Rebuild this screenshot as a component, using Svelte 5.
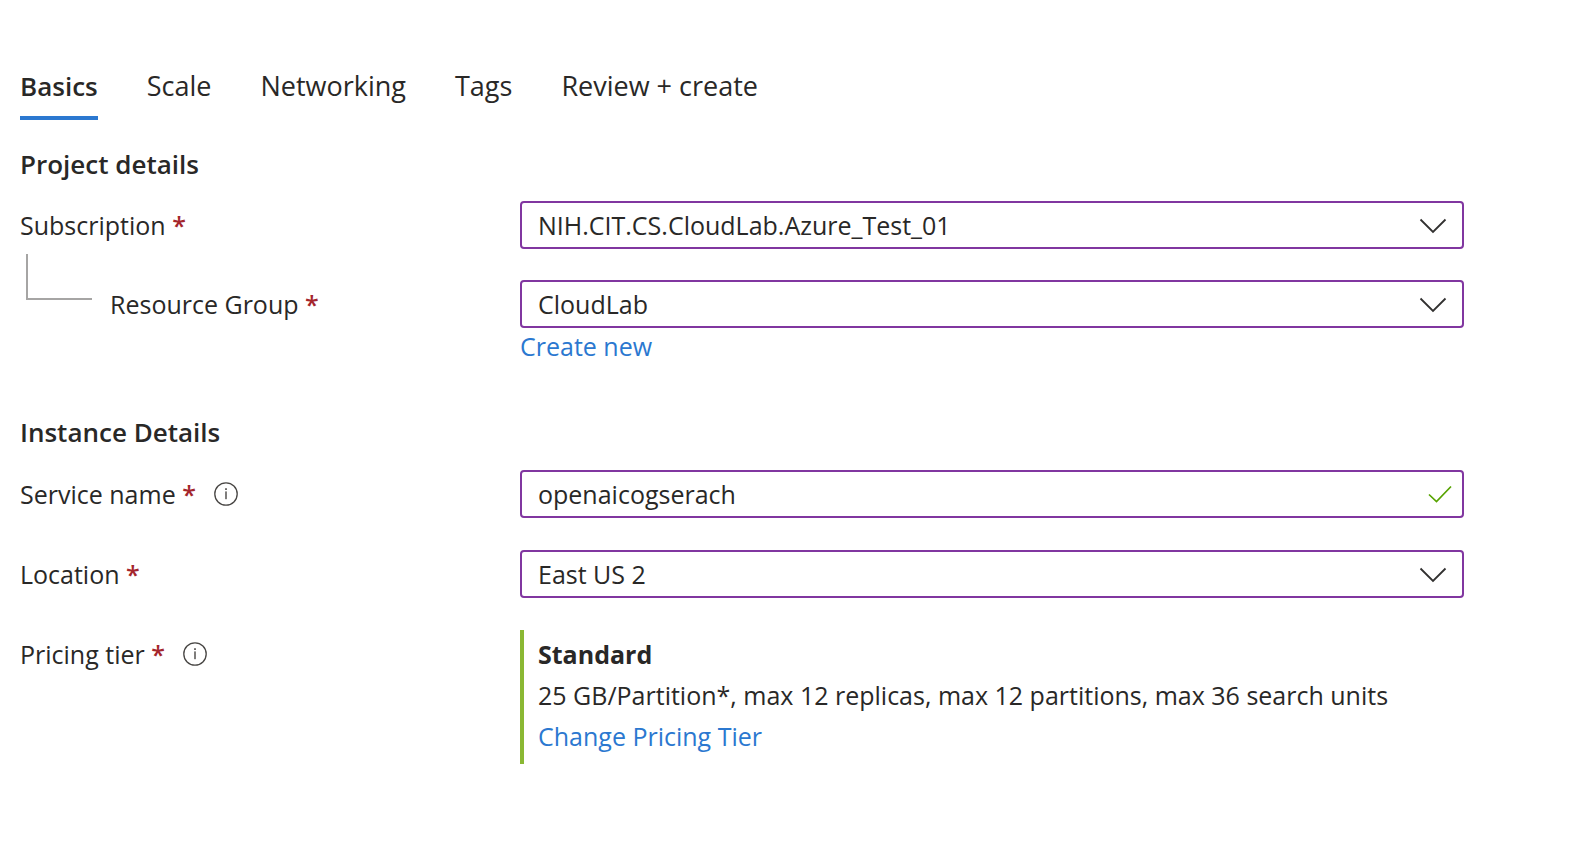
<script>
  const tabs = ['Basics', 'Scale', 'Networking', 'Tags', 'Review + create'];
  let active = $state('Basics');
  let serviceName = $state('openaicogserach');
</script>

{#snippet chevron()}
  <svg class="chevron" viewBox="0 0 28 16" aria-hidden="true">
    <path d="M1.5 1.5 L14 14 L26.5 1.5" fill="none" stroke="#323130" stroke-width="1.8" />
  </svg>
{/snippet}

{#snippet info(label)}
  <button class="info" type="button" aria-label={label}>
    <svg viewBox="0 0 24 24" aria-hidden="true">
      <circle cx="12" cy="12" r="11.2" fill="none" stroke="#484644" stroke-width="1.3" />
      <rect x="11.2" y="9.4" width="1.6" height="7.8" fill="#605e5c" />
      <rect x="11.1" y="6.2" width="1.8" height="1.8" fill="#605e5c" />
    </svg>
  </button>
{/snippet}

<main>
  <div class="tabs" role="tablist">
    {#each tabs as tab}
      <button
        type="button"
        role="tab"
        class:active={tab === active}
        aria-selected={tab === active}
        onclick={() => (active = tab)}>{tab}</button>
    {/each}
  </div>

  <form>
    <section>
      <h2>Project details</h2>
      <div class="rows">
        <div class="row">
          <div class="label">
            <label for="subscription">Subscription <span class="req">*</span></label>
          </div>
          <div class="control">
            <select id="subscription"><option>NIH.CIT.CS.CloudLab.Azure_Test_01</option></select>
            {@render chevron()}
          </div>
        </div>
        <div class="row">
          <div class="label child">
            <span class="branch"></span>
            <label for="group">Resource Group <span class="req">*</span></label>
          </div>
          <div>
            <div class="control">
              <select id="group"><option>CloudLab</option></select>
              {@render chevron()}
            </div>
            <a class="below" href="#create">Create new</a>
          </div>
        </div>
      </div>
    </section>

    <section>
      <h2>Instance Details</h2>
      <div class="rows">
        <div class="row">
          <div class="label">
            <label for="service">Service name <span class="req">*</span></label>
            {@render info('About service name')}
          </div>
          <div class="control">
            <input id="service" type="text" bind:value={serviceName} />
            <svg class="check" viewBox="0 0 24 18" aria-hidden="true">
              <path d="M1 9.5 L8.5 16.5 L23 1.5" fill="none" stroke="#57a300" stroke-width="1.7" />
            </svg>
          </div>
        </div>
        <div class="row">
          <div class="label">
            <label for="location">Location <span class="req">*</span></label>
          </div>
          <div class="control">
            <select id="location"><option>East US 2</option></select>
            {@render chevron()}
          </div>
        </div>
        <div class="row">
          <div class="label">
            <span>Pricing tier <span class="req">*</span></span>
            {@render info('About pricing tier')}
          </div>
          <div class="tier">
            <strong>Standard</strong>
            <span>25 GB/Partition*, max 12 replicas, max 12 partitions, max 36 search units</span>
            <a href="#tier">Change Pricing Tier</a>
          </div>
        </div>
      </div>
    </section>
  </form>
</main>

<style>
  :global(body) {
    margin: 0;
    background: #fff;
  }
  main {
    box-sizing: border-box;
    padding: 68px 112px 68px 20px;
    font-family: 'Segoe UI', 'Open Sans', 'Noto Sans', sans-serif;
    font-size: 25px;
    line-height: 36px;
    color: #292827;
  }
  button,
  select,
  input {
    font: inherit;
    color: inherit;
  }
  .tabs {
    display: flex;
    flex-wrap: wrap;
    gap: 49px;
  }
  .tabs button {
    padding: 0 0 12px;
    border: 0;
    border-bottom: 4px solid transparent;
    background: none;
    font-size: 27px;
    cursor: pointer;
  }
  .tabs button.active {
    font-size: 26px;
    font-weight: 600;
    border-bottom-color: #2b78d0;
  }
  h2 {
    margin: 26px 0 19px;
    font-size: 26px;
    line-height: 36px;
    font-weight: 600;
  }
  section + section h2 {
    margin: 50px 0 20px;
  }
  .rows {
    display: grid;
    gap: 31px;
  }
  section + section .rows {
    gap: 32px;
  }
  .row {
    display: grid;
    grid-template-columns: 500px minmax(0, 1fr);
    align-items: start;
  }
  .label {
    display: flex;
    align-items: center;
    gap: 18px;
    height: 48px;
  }
  .label.child {
    padding-left: 6px;
  }
  .branch {
    align-self: flex-start;
    box-sizing: border-box;
    width: 66px;
    height: 46px;
    margin-top: -26px;
    border-left: 2px solid #a6a5a4;
    border-bottom: 2px solid #a6a5a4;
  }
  .req {
    color: #a4262c;
    font-weight: 600;
  }
  .info {
    display: flex;
    padding: 0;
    border: 0;
    background: none;
    cursor: pointer;
  }
  .info svg {
    width: 24px;
    height: 24px;
  }
  .control {
    position: relative;
  }
  select,
  input {
    display: block;
    box-sizing: border-box;
    width: 100%;
    height: 48px;
    padding: 0 60px 0 16px;
    border: 2px solid #8136a0;
    border-radius: 4px;
    background: #fff;
    appearance: none;
    outline: none;
  }
  .chevron,
  .check {
    position: absolute;
    pointer-events: none;
  }
  .chevron {
    top: 17px;
    right: 17px;
    width: 28px;
    height: 16px;
  }
  .check {
    top: 15px;
    right: 12px;
    width: 24px;
    height: 18px;
  }
  a {
    color: #2b78d0;
    text-decoration: none;
  }
  .below {
    display: block;
  }
  .tier {
    display: grid;
    justify-items: start;
    padding: 4px 0 7px 14px;
    border-left: 4px solid #8ab833;
    line-height: 41px;
  }
  .tier strong {
    font-weight: 700;
  }
</style>
